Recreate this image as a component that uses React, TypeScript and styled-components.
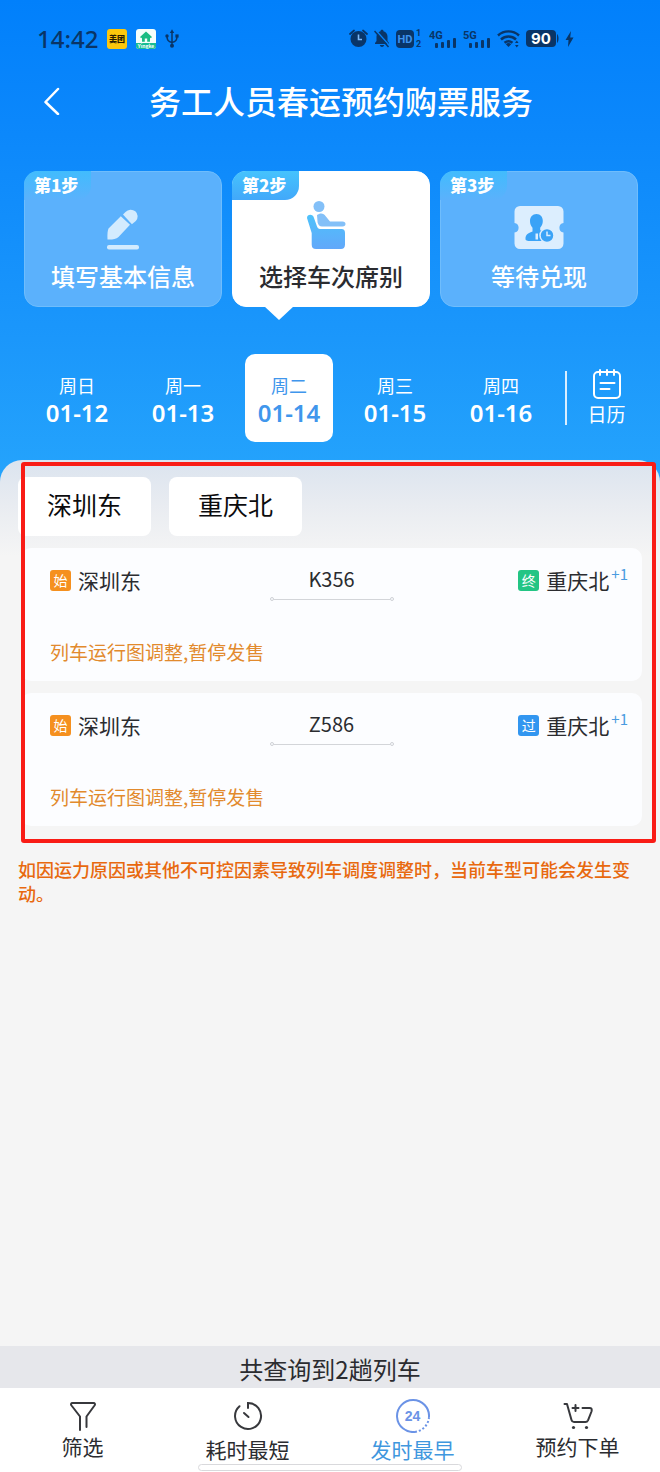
import React from 'react';
import styled, { createGlobalStyle, css } from 'styled-components';

const GlobalStyle = createGlobalStyle`
  *, *::before, *::after { box-sizing: border-box; }
  body {
    margin: 0;
    background: #f5f5f5;
    color: #2b2c30;
    font-family: "Noto Sans CJK SC", "Noto Sans", sans-serif;
  }
  button { margin: 0; padding: 0; border: 0; background: none; font: inherit; color: inherit; cursor: pointer; }
  p, h1, ul { margin: 0; padding: 0; }
  ul { list-style: none; }
  svg { display: block; flex: none; }
`;

const INK = '#093567';

const Page = styled.div`
  display: flex;
  flex-direction: column;
  min-height: 100vh;
`;

const Hero = styled.header`
  padding-bottom: 24px;
  background: linear-gradient(180deg, #0180fb 0%, #0b87fb 25%, #1b97fb 70%, #25a4fc 100%);
`;

const StatusBar = styled.div`
  display: flex;
  align-items: center;
  justify-content: space-between;
  height: 77px;
  padding: 0 86px 0 37px;
  color: ${INK};
`;

const StatusGroup = styled.div<{ $gap: number }>`
  display: flex;
  align-items: center;
  gap: ${(p) => p.$gap}px;
`;

const Clock = styled.span`
  font-family: "Noto Sans", sans-serif;
  font-size: 24px;
  font-weight: 500;
  line-height: 32px;
`;

const NavBar = styled.nav`
  display: flex;
  align-items: center;
  height: 48px;
  padding: 0 36px 0 44px;
  color: #fff;
`;

const BackButton = styled.button`
  width: 14px;
  height: 28px;
`;

const Title = styled.h1`
  flex: 1;
  padding-bottom: 2px;
  text-align: center;
  font-size: 32px;
  line-height: 46px;
  font-weight: 500;
`;

const Steps = styled.ul`
  display: grid;
  grid-template-columns: repeat(3, 1fr);
  gap: 10px;
  padding: 46px 22px 0 24px;
`;

const StepCard = styled.li<{ $active?: boolean }>`
  position: relative;
  display: flex;
  flex-direction: column;
  align-items: center;
  height: 136px;
  padding-top: 18px;
  border-radius: 14px;
  border: 1px solid ${(p) => (p.$active ? '#fff' : '#6fbdfc')};
  background: ${(p) => (p.$active ? '#fff' : '#5bb1fc')};
  color: ${(p) => (p.$active ? '#2b2c30' : '#fff')};
  ${(p) =>
    p.$active &&
    css`
      &::after {
        content: '';
        position: absolute;
        top: 100%;
        left: 31px;
        border: 15px solid transparent;
        border-top: 14px solid #fff;
        border-bottom: 0;
      }
    `}
`;

const StepTag = styled.span<{ $active?: boolean }>`
  position: absolute;
  top: -1px;
  left: -1px;
  width: 67px;
  height: 29px;
  padding-left: 10px;
  border-radius: 14px 0 14px 0;
  background: ${(p) =>
    p.$active
      ? 'linear-gradient(180deg, #45c3fd, #42a8fa)'
      : 'linear-gradient(180deg, #41bcfd, #5bb1fc)'};
  color: #fff;
  font-size: 17px;
  line-height: 28px;
  font-weight: 900;
  white-space: nowrap;
`;

const StepLabel = styled.span`
  margin-top: 6px;
  font-size: 24px;
  line-height: 32px;
  font-weight: 500;
`;

const DateBar = styled.div`
  display: flex;
  align-items: center;
  margin-top: 47px;
  padding-bottom: 18px;
  padding-left: 24px;
  color: #fff;
`;

const Dates = styled.div`
  flex: 1;
  display: grid;
  grid-template-columns: repeat(5, 1fr);
  justify-items: center;
`;

const DateButton = styled.button<{ $active?: boolean }>`
  display: flex;
  flex-direction: column;
  align-items: center;
  justify-content: center;
  width: 88px;
  height: 88px;
  padding-top: 4px;
  border-radius: 10px;
  background: ${(p) => (p.$active ? '#fff' : 'transparent')};
  color: ${(p) => (p.$active ? '#4096ec' : '#fff')};
`;

const Weekday = styled.span`
  font-size: 18px;
  line-height: 26px;
`;

const DayNumber = styled.span`
  font-family: "Noto Sans", sans-serif;
  font-size: 24px;
  line-height: 30px;
  font-weight: 600;
`;

const Divider = styled.span`
  width: 2px;
  height: 54px;
  margin-left: 11px;
  background: #d9eeff;
`;

const CalendarButton = styled.button`
  display: flex;
  flex-direction: column;
  align-items: center;
  width: 79px;
  margin-right: 14px;
  font-size: 19px;
  line-height: 28px;
`;

const Sheet = styled.main`
  flex: 1;
  margin-top: -24px;
  padding: 17px 18px 40px;
  border-radius: 22px 22px 0 0;
  background: linear-gradient(180deg, #dbe4ef 0, #e9ecf1 46px, #f5f5f5 96px);
`;

const Results = styled.section`
  position: relative;
  padding-bottom: 17px;
`;

const Highlight = styled.div`
  position: absolute;
  inset: -15px -14px 0 3px;
  border: 4px solid #f91c16;
  border-radius: 3px;
  pointer-events: none;
`;

const StationTabs = styled.div`
  display: flex;
  gap: 18px;
`;

const StationTab = styled.button`
  width: 133px;
  height: 59px;
  padding-bottom: 5px;
  border-radius: 8px;
  background: #fff;
  color: #0b0b0d;
  font-size: 25px;
  line-height: 36px;
`;

const TrainList = styled.ul`
  display: flex;
  flex-direction: column;
  gap: 12px;
  margin-top: 12px;
  padding-left: 3px;
`;

const TrainCard = styled.li`
  height: 133px;
  padding-top: 17px;
  border-radius: 10px;
  background: #fcfdff;
`;

const TrainRow = styled.div`
  display: grid;
  grid-template-columns: 1fr 124px 1fr;
  height: 36px;
`;

const Stop = styled.div<{ $end?: boolean }>`
  display: flex;
  align-items: center;
  justify-content: ${(p) => (p.$end ? 'flex-end' : 'flex-start')};
  gap: 7px;
  height: 30px;
  padding: 0 14px 0 29px;
  font-size: 21px;
  line-height: 30px;
`;

const StopBadge = styled.span<{ $color: string }>`
  width: 21px;
  height: 21px;
  border-radius: 3px;
  background: ${(p) => p.$color};
  color: #fff;
  font-size: 14px;
  line-height: 21px;
  text-align: center;
`;

const DayShift = styled.sup`
  align-self: flex-start;
  margin-left: -5px;
  color: #4a9be0;
  font-size: 15px;
  line-height: 18px;
`;

const TrainNumber = styled.div`
  display: flex;
  flex-direction: column;
  align-items: center;
  font-size: 20px;
  line-height: 28px;
`;

const Track = styled.span`
  display: flex;
  align-items: center;
  width: 100%;
  margin-top: 4px;
  &::before, &::after {
    content: '';
    width: 4px;
    height: 4px;
    border: 1px solid #cfd1d6;
    border-radius: 50%;
  }
`;

const TrackLine = styled.span`
  flex: 1;
  height: 1px;
  background: #d3d5d9;
`;

const Suspended = styled.p`
  margin-top: 37px;
  padding-left: 29px;
  color: #e28a2d;
  font-size: 19px;
  line-height: 28px;
`;

const Notice = styled.p`
  margin-top: 14px;
  color: #e8690f;
  font-size: 18px;
  line-height: 24px;
  font-weight: 500;
`;

const Summary = styled.p`
  height: 42px;
  padding-top: 5px;
  background: #e6e7eb;
  text-align: center;
  font-size: 24px;
  line-height: 36px;
`;

const TabBar = styled.footer`
  position: relative;
  display: grid;
  grid-template-columns: repeat(4, 1fr);
  height: 84px;
  background: #fff;
`;

const TabButton = styled.button<{ $active?: boolean; $low?: boolean }>`
  display: flex;
  flex-direction: column;
  align-items: center;
  padding-top: ${(p) => (p.$low ? 10 : 13)}px;
  color: ${(p) => (p.$active ? '#3f97de' : '#2b2c30')};
  font-size: 21px;
  line-height: 30px;
`;

const TabIcon = styled.span<{ $tall?: boolean }>`
  display: flex;
  align-items: center;
  justify-content: center;
  height: ${(p) => (p.$tall ? 36 : 30)}px;
`;

const HomeIndicator = styled.div`
  position: absolute;
  left: 30%;
  right: 30%;
  bottom: 1px;
  height: 7px;
  border: 1px solid #d9d9dc;
  border-radius: 4px;
  background: #fff;
`;

const AppBadge = () => (
  <svg width="20" height="20" viewBox="0 0 20 20">
    <rect width="20" height="20" rx="3" fill="#fdc80c" />
    <text x="10" y="13" fontSize="8" fontWeight="900" textAnchor="middle" fill="#2a1d00">美团</text>
  </svg>
);

const HomeBadge = () => (
  <svg width="20" height="20" viewBox="0 0 20 20">
    <rect width="20" height="20" rx="3" fill="#f4fffb" />
    <path d="M0 14h20v3a3 3 0 0 1-3 3H3a3 3 0 0 1-3-3z" fill="#19bd93" />
    <path d="M10 2.600 4 8l1.200 1.200.8-.7v4.300h2.800V9.600h2.400v3.200H14V8.500l.8.7L16 8z" fill="#19bd83" />
    <text x="10" y="18.500" fontSize="5" fontWeight="700" textAnchor="middle" fill="#fff">Yingke</text>
  </svg>
);

const UsbIcon = () => (
  <svg width="14" height="19" viewBox="0 0 14 19" fill="none" stroke={INK} strokeWidth="1.5">
    <path d="M7 2.500V16M7 13.500C3 12.500 2 11 2 7M7 13.500c4-1 5-2.500 5-6.500" />
    <path d="M7 .3 9.200 4H4.800z" fill={INK} stroke="none" />
    <circle cx="7" cy="16.700" r="2" fill={INK} stroke="none" />
    <circle cx="2" cy="7" r="1.700" fill={INK} stroke="none" />
    <path d="M10.400 5.400h3.200v3.200h-3.200z" fill={INK} stroke="none" />
  </svg>
);

const AlarmIcon = () => (
  <svg width="19" height="19" viewBox="0 0 19 19">
    <circle cx="9.500" cy="10" r="8" fill={INK} />
    <path d="M1 5 5 1.500M18 5l-4-3.500" stroke={INK} strokeWidth="1.800" strokeLinecap="round" />
    <path d="M9.500 5.500V10.500H13" stroke="#7fb9f5" strokeWidth="1.600" fill="none" />
  </svg>
);

const MutedIcon = () => (
  <svg width="16" height="19" viewBox="0 0 16 19">
    <path d="M8 .8c1 0 1.500.6 1.500 1.400 2.500.7 4 2.700 4 5.300v4.500l1.500 2v1H1v-1l1.500-2V7.500c0-2.600 1.500-4.600 4-5.300C6.500 1.400 7 .8 8 .8zM5.800 16h4.400c-.3 1.300-1.200 2-2.200 2s-1.900-.7-2.200-2z" fill={INK} />
    <path d="M1.500 1 16 17" stroke="#0583fb" strokeWidth="1.500" />
    <path d="M.5 2 14.500 18" stroke={INK} strokeWidth="1.500" />
  </svg>
);

const HdIcon = () => (
  <svg width="27" height="24" viewBox="0 0 27 24" fill={INK}>
    <rect x="0" y="3" width="18" height="18" rx="4" />
    <text x="9" y="16" fontFamily="Roboto, sans-serif" fontSize="11" fontWeight="700" textAnchor="middle" fill="#3d93ef">HD</text>
    <text x="20" y="9" fontFamily="Roboto, sans-serif" fontSize="9" fontWeight="700">1</text>
    <text x="20" y="20" fontFamily="Roboto, sans-serif" fontSize="9" fontWeight="700">2</text>
  </svg>
);

const SignalIcon = ({ label }: { label: string }) => (
  <svg width="28" height="20" viewBox="0 0 28 20" fill={INK}>
    <text x="0" y="9.500" fontFamily="Roboto, sans-serif" fontSize="11" fontWeight="700">{label}</text>
    <rect x="6" y="14" width="3" height="5" rx="1" />
    <rect x="12" y="13" width="3" height="6" rx="1" />
    <rect x="18" y="11" width="3" height="8" rx="1" />
    <rect x="24" y="9" width="3" height="10" rx="1" />
  </svg>
);

const WifiIcon = () => (
  <svg width="23" height="19" viewBox="0 0 23 19" fill="none" stroke={INK} strokeWidth="2.400">
    <path d="M1 6.500a15.500 15.500 0 0 1 21 0M4 10.500a11 11 0 0 1 15 0M7.500 13.800a6.500 6.500 0 0 1 8 0" />
    <path d="M8.800 15.200a4 4 0 0 1 5.400 0L11.500 18z" fill={INK} stroke="none" />
    <path d="M19.800 11.500l1.800 2.500H18zM19.800 18.500l1.800-2.500H18z" fill={INK} stroke="none" />
  </svg>
);

const BatteryIcon = () => (
  <svg width="33" height="18" viewBox="0 0 33 18">
    <rect width="30" height="17" rx="4" fill={INK} />
    <path d="M31 4c2 1 2 8 0 9z" fill={INK} />
    <text x="15" y="14" fontFamily="Inter, sans-serif" fontSize="15" fontWeight="700" textAnchor="middle" fill="#fff">90</text>
  </svg>
);

const BoltIcon = () => (
  <svg width="9" height="16" viewBox="0 0 9 16">
    <path d="M6 0 .5 9h3L3 16l5.500-9.500H5.200z" fill={INK} />
  </svg>
);

const BackIcon = () => (
  <svg width="16" height="28" viewBox="0 0 16 28" fill="none" stroke="#fff" strokeWidth="2.500" strokeLinecap="round" strokeLinejoin="round">
    <path d="M14 2 1.500 15 14 27" />
  </svg>
);

const PencilIcon = () => (
  <svg width="50" height="64" viewBox="0 0 50 64" fill="#d3ebfe">
    <path d="M9.500 49.500c-.3-5.500.2-9.200 1-11l12.300-12.300 9.200 8.600-11.500 12.200c-2.500 2-6.500 2.800-11 2.500z" />
    <path d="m25 24.500 2.500-2.600a7.400 7.400 0 0 1 9.800-.6 6.700 6.700 0 0 1 .5 9.700l-3.900 3.300z" />
    <rect x="9" y="55" width="32" height="4.500" rx="2" />
  </svg>
);

const SeatIcon = () => (
  <svg width="50" height="64" viewBox="0 0 50 64">
    <defs>
      <linearGradient id="seat" x1="0" y1="0" x2="0" y2="1">
        <stop offset="0" stopColor="#4dc2fb" />
        <stop offset="1" stopColor="#62a8fa" />
      </linearGradient>
    </defs>
    <g transform="translate(-5 0)">
      <circle cx="18" cy="16.500" r="5.500" fill="#83c0f8" />
      <path d="M16 25c3-2.500 7-2 8.500 1l4.500 5.500h12.500c4 0 4 5 0 5H21c-2.500 0-3.600-1.400-4.400-4z" fill="#83c0f8" />
      <path d="M6 28c0-4 6-4.500 7 0l3 8.500c.6 1.500 1.500 2.500 3 2.500h21.500c2.500 0 3.500 1.500 3.500 4v11.500c0 3-1.500 4.500-4 4.500H15c-3 0-4.300-1.500-4.300-4.500V43z" fill="url(#seat)" />
    </g>
  </svg>
);

const TicketIcon = () => (
  <svg width="50" height="64" viewBox="0 0 50 64">
    <path d="M6 16h38a5.500 5.500 0 0 1 5.500 5.500V33a4.800 4.800 0 0 0 0 9.500v11A5.500 5.500 0 0 1 44 59H6a5.500 5.500 0 0 1-5.500-5.500v-11a4.800 4.800 0 0 0 0-9.500V21.500A5.500 5.500 0 0 1 6 16z" fill="#dceefe" />
    <path d="M22.500 24c4 0 6.300 3 6.300 7 0 3-1 5-2.600 6.700v2.500l6 2.400V51H17c-4 0-5.500-.5-5.500-2 0-4 1.500-5.500 7-7.500v-3.800c-1.600-1.700-2.500-3.700-2.500-6.700 0-4 2.500-7 6.500-7z" fill="#3aa3f7" />
    <path d="M21.500 43.500h2.500v6h-2.500z" fill="#dceefe" />
    <circle cx="33" cy="45.500" r="7" fill="#3aa3f7" stroke="#dceefe" strokeWidth="1.500" />
    <path d="M33 41.500v4h3.500" fill="none" stroke="#dceefe" strokeWidth="1.500" />
  </svg>
);

const CalendarIcon = () => (
  <svg width="30" height="32" viewBox="0 0 30 32" fill="none" stroke="#fff" strokeWidth="2" strokeLinecap="round">
    <rect x="2" y="4" width="26" height="26" rx="4" />
    <path d="M8 2v5M15 2v5M22 2v5M8.500 15h14M8.500 21h9" />
  </svg>
);

const FilterIcon = () => (
  <svg width="26" height="30" viewBox="0 0 26 30" fill="none" stroke="#37383c" strokeWidth="2" strokeLinecap="round" strokeLinejoin="round">
    <path d="M10 29V15.500L1.500 4.500C.6 3.200 1 2 2.500 2h21c1.500 0 1.900 1.200 1 2.500l-8 11V26" />
  </svg>
);

const TimerIcon = () => (
  <svg width="30" height="30" viewBox="0 0 30 30" fill="none" stroke="#37383c" strokeWidth="2" strokeLinecap="round">
    <path d="M15 7V2a13 13 0 1 1-8.500 3.200" />
    <path d="m11 12 4.500 4" />
  </svg>
);

const EarliestIcon = () => (
  <svg width="34" height="34" viewBox="0 0 34 34" fill="none" stroke="#6b93e6" strokeWidth="2">
    <path d="M33 18A16 16 0 1 0 19 32.900" />
    <path d="M19 32.900A16 16 0 0 0 33 18" strokeDasharray="2 2" />
    <text x="16.500" y="22" fontFamily="Liberation Sans, sans-serif" fontSize="14" fontWeight="700" textAnchor="middle" fill="#6b93e6" stroke="none">24</text>
  </svg>
);

const CartIcon = () => (
  <svg width="30" height="28" viewBox="0 0 30 28" fill="none" stroke="#37383c" strokeWidth="2" strokeLinecap="round" strokeLinejoin="round">
    <path d="M1.500 2H4l4.500 16c.4 1.500 1 2 2.500 2h11.500c1.300 0 2-.6 2.500-1.700L28.500 9.500C29.100 7 28.500 6 26.500 6h-7" />
    <path d="M12.500 3v6M9.500 6h6" />
    <circle cx="10.500" cy="25.500" r="1.600" fill="#37383c" stroke="none" />
    <circle cx="23.500" cy="25.500" r="1.600" fill="#37383c" stroke="none" />
  </svg>
);

const steps = [
  { tag: '第1步', label: '填写基本信息', icon: <PencilIcon /> },
  { tag: '第2步', label: '选择车次席别', icon: <SeatIcon />, active: true },
  { tag: '第3步', label: '等待兑现', icon: <TicketIcon /> },
];

const dates = [
  { weekday: '周日', day: '01-12' },
  { weekday: '周一', day: '01-13' },
  { weekday: '周二', day: '01-14', active: true },
  { weekday: '周三', day: '01-15' },
  { weekday: '周四', day: '01-16' },
];

const trains = [
  { no: 'K356', from: '深圳东', to: '重庆北', badge: '终', color: '#23c584' },
  { no: 'Z586', from: '深圳东', to: '重庆北', badge: '过', color: '#3296f0' },
];

const tabs = [
  { label: '筛选', icon: <FilterIcon /> },
  { label: '耗时最短', icon: <TimerIcon />, low: true },
  { label: '发时最早', icon: <EarliestIcon />, low: true, active: true },
  { label: '预约下单', icon: <CartIcon /> },
];

export default function App() {
  return (
    <Page>
      <GlobalStyle />
      <Hero>
        <StatusBar>
          <StatusGroup $gap={9}>
            <Clock>14:42</Clock>
            <AppBadge />
            <HomeBadge />
            <UsbIcon />
          </StatusGroup>
          <StatusGroup $gap={6}>
            <AlarmIcon />
            <MutedIcon />
            <HdIcon />
            <SignalIcon label="4G" />
            <SignalIcon label="5G" />
            <WifiIcon />
            <BatteryIcon />
            <BoltIcon />
          </StatusGroup>
        </StatusBar>
        <NavBar>
          <BackButton aria-label="返回"><BackIcon /></BackButton>
          <Title>务工人员春运预约购票服务</Title>
        </NavBar>
        <Steps>
          {steps.map((s) => (
            <StepCard key={s.tag} $active={s.active}>
              <StepTag $active={s.active}>{s.tag}</StepTag>
              {s.icon}
              <StepLabel>{s.label}</StepLabel>
            </StepCard>
          ))}
        </Steps>
        <DateBar>
          <Dates>
            {dates.map((d) => (
              <DateButton key={d.day} $active={d.active}>
                <Weekday>{d.weekday}</Weekday>
                <DayNumber>{d.day}</DayNumber>
              </DateButton>
            ))}
          </Dates>
          <Divider />
          <CalendarButton>
            <CalendarIcon />
            日历
          </CalendarButton>
        </DateBar>
      </Hero>
      <Sheet>
        <Results>
          <StationTabs>
            <StationTab>深圳东</StationTab>
            <StationTab>重庆北</StationTab>
          </StationTabs>
          <TrainList>
            {trains.map((t) => (
              <TrainCard key={t.no}>
                <TrainRow>
                  <Stop>
                    <StopBadge $color="#f5901f">始</StopBadge>
                    {t.from}
                  </Stop>
                  <TrainNumber>
                    {t.no}
                    <Track><TrackLine /></Track>
                  </TrainNumber>
                  <Stop $end>
                    <StopBadge $color={t.color}>{t.badge}</StopBadge>
                    {t.to}
                    <DayShift>+1</DayShift>
                  </Stop>
                </TrainRow>
                <Suspended>列车运行图调整,暂停发售</Suspended>
              </TrainCard>
            ))}
          </TrainList>
          <Highlight />
        </Results>
        <Notice>如因运力原因或其他不可控因素导致列车调度调整时，当前车型可能会发生变动。</Notice>
      </Sheet>
      <Summary>共查询到2趟列车</Summary>
      <TabBar>
        {tabs.map((t) => (
          <TabButton key={t.label} $active={t.active} $low={t.low}>
            <TabIcon $tall={t.low}>{t.icon}</TabIcon>
            {t.label}
          </TabButton>
        ))}
        <HomeIndicator />
      </TabBar>
    </Page>
  );
}
